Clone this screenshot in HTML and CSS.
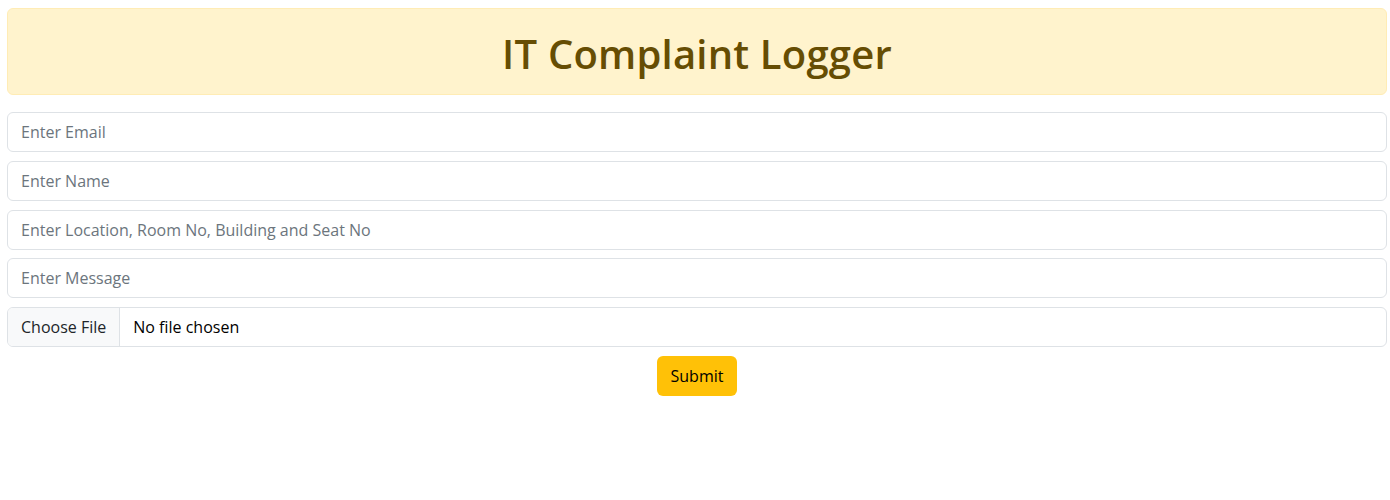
FILE: index.html
```html
<!DOCTYPE html>
<html lang="en">
<head>
<meta charset="utf-8">
<title>IT Complaint Logger</title>
<link rel="stylesheet" href="styles.css">
</head>
<body>
<div class="page">
  <div class="alert">
    <h1 class="title">IT Complaint Logger</h1>
  </div>
  <form class="form">
    <input class="field" type="email" placeholder="Enter Email">
    <input class="field" type="text" placeholder="Enter Name">
    <input class="field" type="text" placeholder="Enter Location, Room No, Building and Seat No">
    <input class="field" type="text" placeholder="Enter Message">
    <div class="field file">
      <span class="file-btn">Choose File</span>
      <span class="file-name">No file chosen</span>
    </div>
    <div class="actions">
      <button class="btn" type="button">Submit</button>
    </div>
  </form>
</div>
</body>
</html>
```
FILE: styles.css
```css
* { box-sizing: border-box; }
body {
  margin: 0;
  background: #fff;
  font-family: "Open Sans", "Noto Sans", sans-serif;
  color: #212529;
}
.page {
  margin: 8px 3px 0 7px;
  display: flex;
  flex-direction: column;
}
.alert {
  background: #fff3cd;
  border: 1px solid #ffecb5;
  border-radius: 6px;
  height: 87px;
  padding-top: 4px;
  display: flex;
  align-items: center;
  justify-content: center;
  margin-bottom: 17px;
}
.title {
  margin: 0;
  color: #664d03;
  font-size: 40px;
  font-weight: 600;
  line-height: 48px;
  letter-spacing: 0.2px;
}
.form {
  display: flex;
  flex-direction: column;
  gap: 8.75px;
}
.field {
  height: 40px;
  border: 1px solid #dee2e6;
  border-radius: 6px;
  padding: 0 13px;
  font-family: inherit;
  font-size: 16px;
  color: #212529;
  background: #fff;
  outline: none;
  width: 100%;
}
.field::placeholder { color: #6c757d; }
.file {
  display: flex;
  align-items: stretch;
  padding: 0;
  overflow: hidden;
}
.file-btn {
  display: flex;
  align-items: center;
  padding: 0 13px;
  background: #f8f9fa;
  border-right: 1px solid #dee2e6;
  color: #212529;
  font-size: 16px;
}
.file-name {
  display: flex;
  align-items: center;
  padding-left: 13px;
  font-size: 16px;
  color: #000;
}
.actions {
  display: flex;
  justify-content: center;
}
.btn {
  width: 80px;
  height: 40px;
  border: none;
  border-radius: 6px;
  background: #ffc107;
  color: #000;
  font-family: inherit;
  font-size: 16px;
  cursor: pointer;
}
```
